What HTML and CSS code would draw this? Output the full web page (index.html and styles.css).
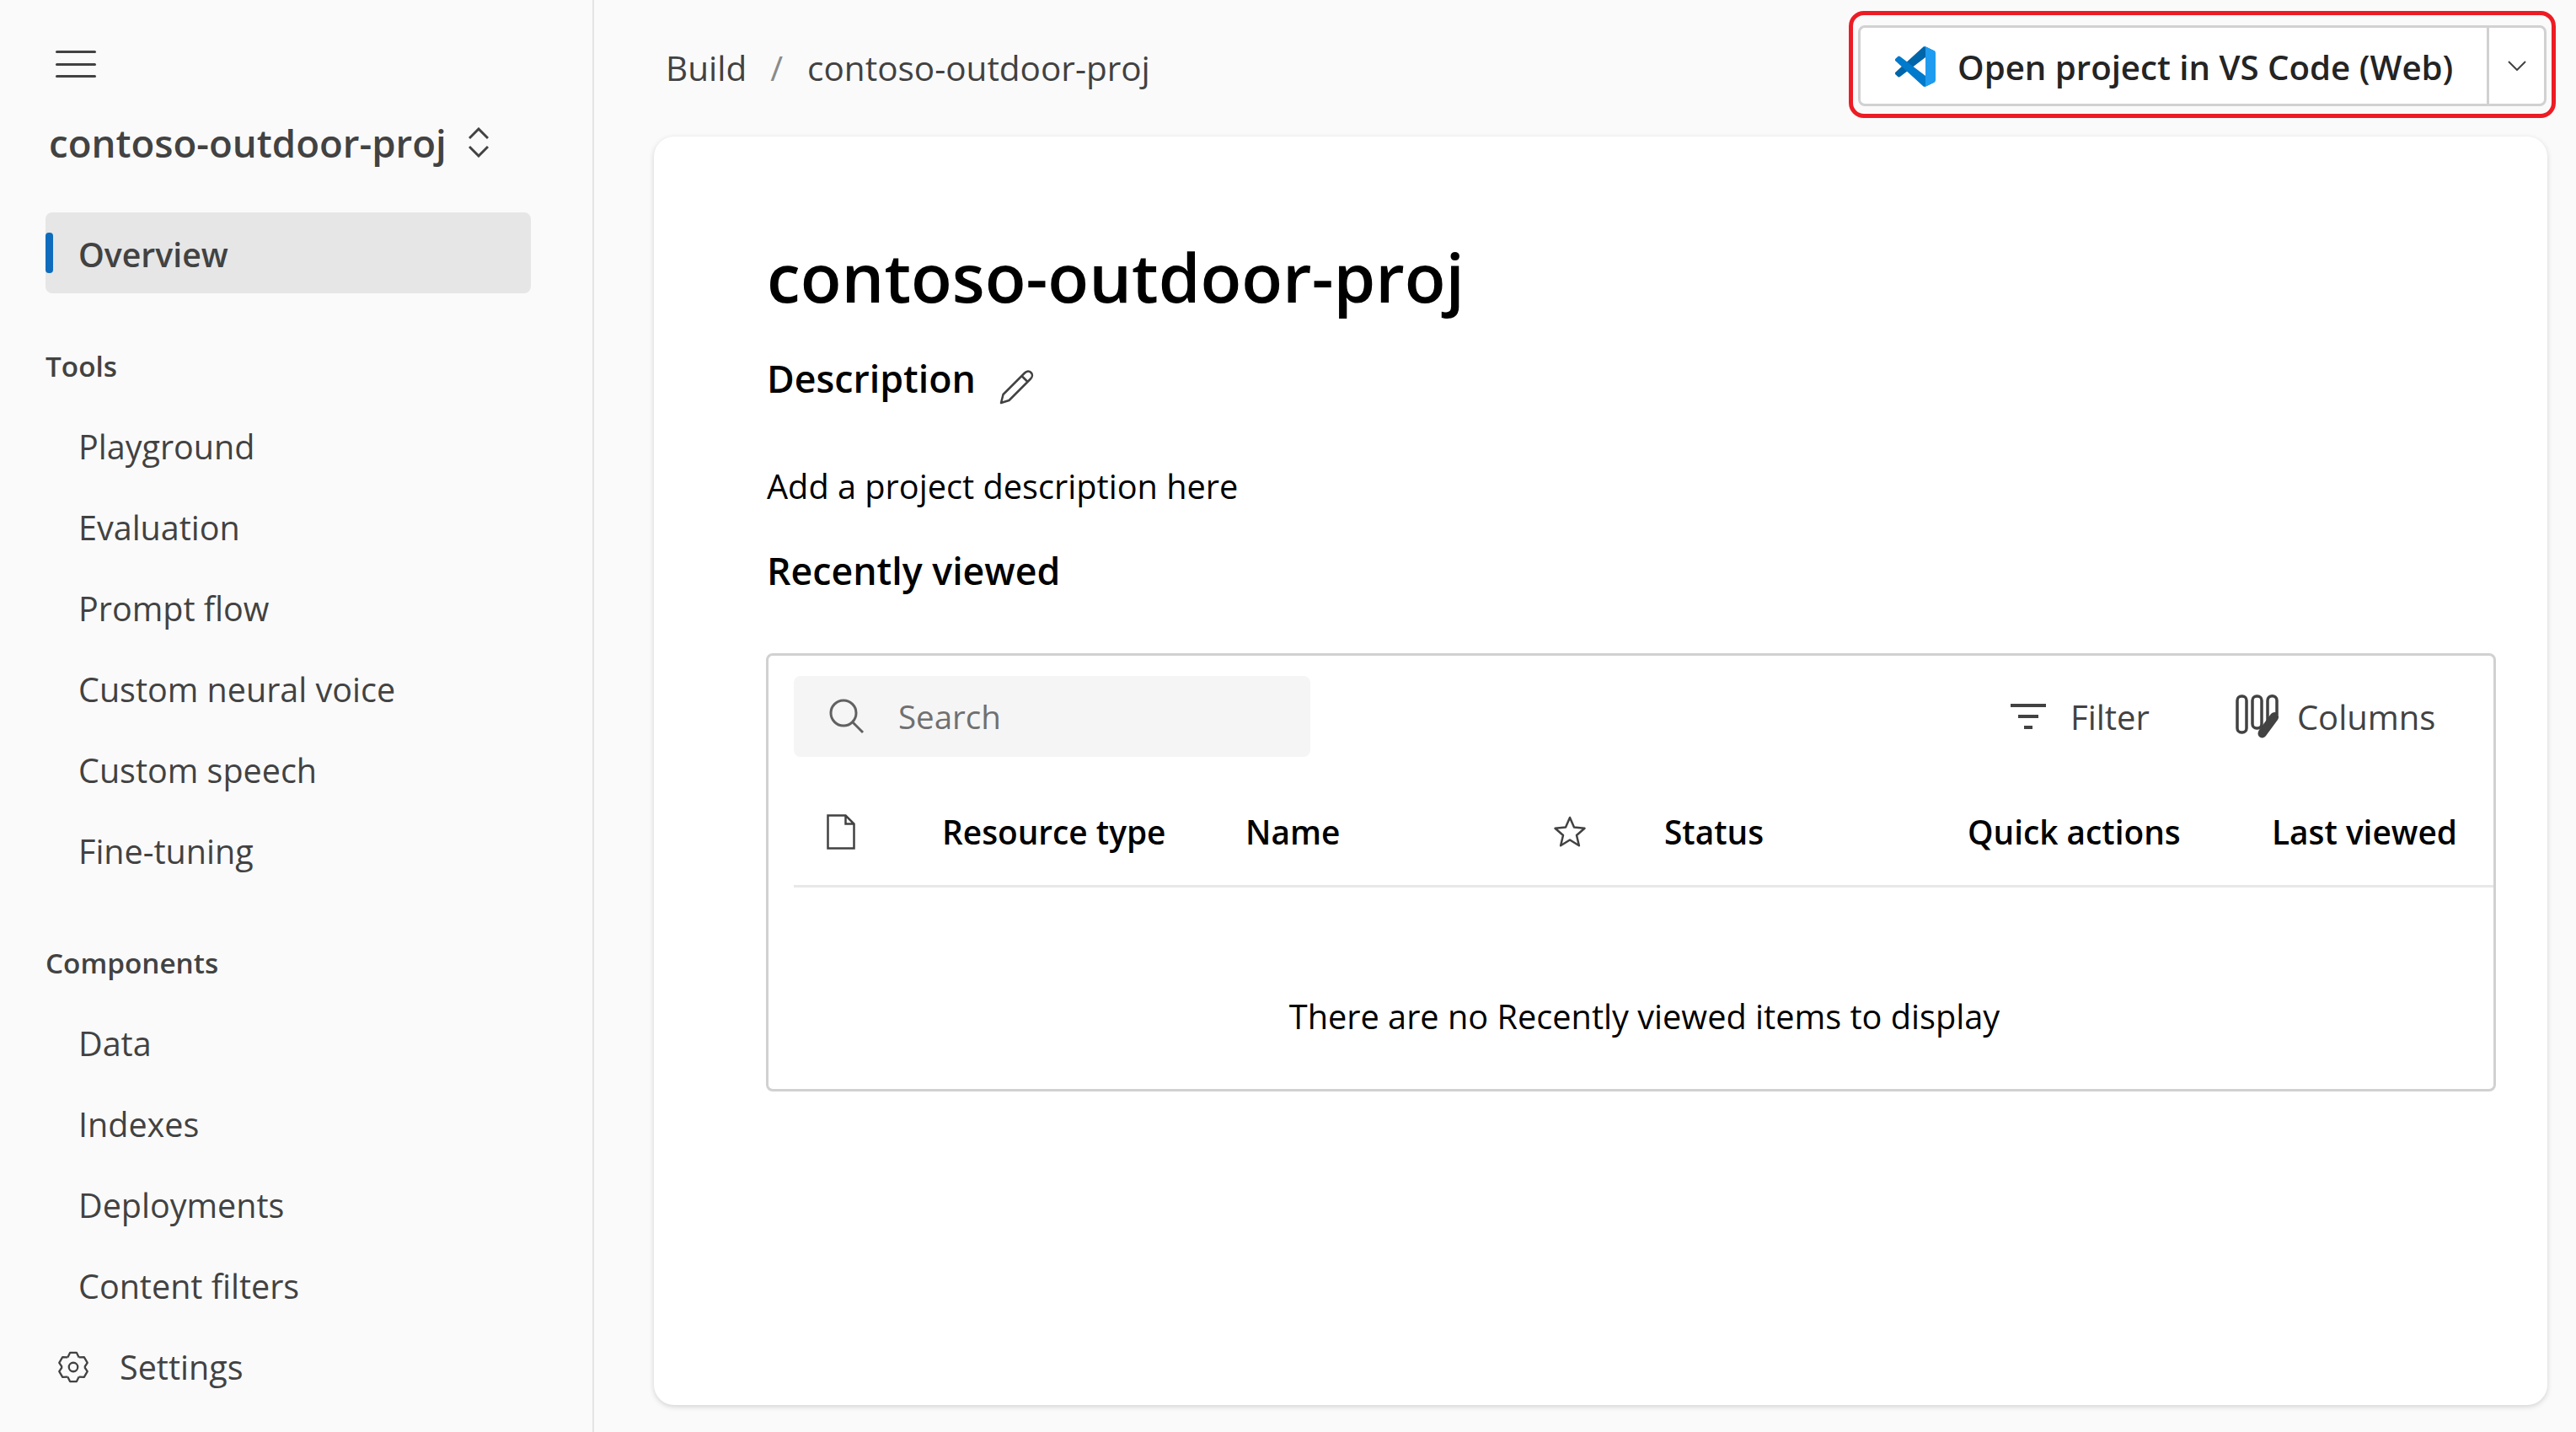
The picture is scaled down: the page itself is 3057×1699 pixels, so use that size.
FILE: index.html
```html
<!DOCTYPE html>
<html lang="en">
<head>
    <meta charset="UTF-8">
    <link rel="stylesheet" href="styles.css">
    <title>contoso-outdoor-proj</title>
</head>
<body>
    <aside class="sidebar">
        <div class="hamburger"><span></span><span></span><span></span></div>
        <div class="project-row">
            <span class="project-name">contoso-outdoor-proj</span>
            <svg class="updown" viewBox="0 0 24 36"><path d="M1 13 12 2l11 11M1 23l11 11 11-11"/></svg>
        </div>
        <a class="overview"><span>Overview</span></a>
        <div class="nav-label tools">Tools</div>
        <a class="nav-item">Playground</a>
        <a class="nav-item">Evaluation</a>
        <a class="nav-item">Prompt flow</a>
        <a class="nav-item">Custom neural voice</a>
        <a class="nav-item">Custom speech</a>
        <a class="nav-item">Fine-tuning</a>
        <div class="nav-label components">Components</div>
        <a class="nav-item">Data</a>
        <a class="nav-item">Indexes</a>
        <a class="nav-item">Deployments</a>
        <a class="nav-item">Content filters</a>
        <a class="nav-item settings">
            <svg class="gear" viewBox="0 0 24 24">
                <circle cx="12" cy="12" r="3"/>
                <path d="M8.2 5.42 9.75 2.26h4.5l1.55 3.16"/>
                <path transform="rotate(60 12 12)" d="M8.2 5.42 9.75 2.26h4.5l1.55 3.16"/>
                <path transform="rotate(120 12 12)" d="M8.2 5.42 9.75 2.26h4.5l1.55 3.16"/>
                <path transform="rotate(180 12 12)" d="M8.2 5.42 9.75 2.26h4.5l1.55 3.16"/>
                <path transform="rotate(240 12 12)" d="M8.2 5.42 9.75 2.26h4.5l1.55 3.16"/>
                <path transform="rotate(300 12 12)" d="M8.2 5.42 9.75 2.26h4.5l1.55 3.16"/>
            </svg>
            <span>Settings</span>
        </a>
    </aside>

    <main class="main">
        <header class="topbar">
            <nav class="crumbs">
                <span>Build</span>
                <span class="crumb-sep">/</span>
                <span>contoso-outdoor-proj</span>
            </nav>
            <div class="split-button">
                <div class="btn-main">
                    <svg class="vscode" viewBox="0 0 100 100">
                        <path fill="#0065A9" d="M96.461 10.796 75.857.876a6.23 6.23 0 0 0-7.107 1.207L1.299 63.583a4.167 4.167 0 0 0 .004 6.162l5.51 5.009a4.167 4.167 0 0 0 5.32.236L93.36 13.37c2.72-2.063 6.627-.123 6.627 3.292v-.239a6.25 6.25 0 0 0-3.526-5.627z"/>
                        <path fill="#007ACC" d="m96.461 89.204-20.604 9.92a6.23 6.23 0 0 1-7.107-1.207L1.299 36.417a4.167 4.167 0 0 1 .004-6.162l5.51-5.009a4.167 4.167 0 0 1 5.32-.236L93.36 86.63c2.72 2.063 6.627.123 6.627-3.292v.239a6.25 6.25 0 0 1-3.526 5.627z"/>
                        <path fill="#1F9CF0" d="M75.858 99.126a6.232 6.232 0 0 1-7.108-1.21c2.306 2.307 6.25.674 6.25-2.588V4.672c0-3.262-3.944-4.895-6.25-2.589a6.232 6.232 0 0 1 7.108-1.21l20.6 9.908A6.25 6.25 0 0 1 100 16.413v67.174a6.25 6.25 0 0 1-3.542 5.632l-20.6 9.907z"/>
                    </svg>
                    <span>Open project in VS Code (Web)</span>
                </div>
                <div class="btn-caret">
                    <svg viewBox="0 0 22 12"><path d="M1 1l10 10L21 1"/></svg>
                </div>
                <div class="callout"></div>
            </div>
        </header>

        <section class="card">
            <h1>contoso-outdoor-proj</h1>
            <div class="desc-row">
                <h2>Description</h2>
                <svg class="pencil" viewBox="0 0 42 42"><path d="M2 40l2.500-10L30 4.500c2.500-2.500 5.500-2.500 7.500-.5s2 5-.5 7.500L11.500 37zM26.500 8l7.500 7.500"/></svg>
            </div>
            <p class="desc-text">Add a project description here</p>
            <h2 class="recent">Recently viewed</h2>

            <div class="table-box">
                <div class="toolbar">
                    <div class="search">
                        <svg viewBox="0 0 42 42"><circle cx="17" cy="17" r="15"/><path d="M28 28l12 12"/></svg>
                        <span>Search</span>
                    </div>
                    <div class="tool filter">
                        <svg viewBox="0 0 42 30"><path d="M0 2h42M9 15h24M16 28h10"/></svg>
                        <span>Filter</span>
                    </div>
                    <div class="tool columns">
                        <svg viewBox="0 0 52 52">
                            <rect x="2" y="2" width="11" height="43" rx="5"/>
                            <rect x="20" y="2" width="11" height="38" rx="5"/>
                            <path d="M38 32V7c0-7 11-7 11 0v17"/>
                            <path class="solid" d="M28 50c-2-2-2-5 0-8l14-19c2-2 5-3 7-1s3 5 1 8L36 49c-2 3-6 3-8 1z"/>
                        </svg>
                        <span>Columns</span>
                    </div>
                </div>
                <div class="head-row">
                    <svg class="file" viewBox="0 0 34 42"><path d="M1.500 1.500h21l10 10v29h-31zM22.500 1.500v10h10"/></svg>
                    <span>Resource type</span>
                    <span>Name</span>
                    <svg class="star" viewBox="0 0 40 40"><path d="M20 3l5 11.500 12.500 1.200-9.500 8.300 2.900 12.300L20 29.500 9.100 36.300 12 24l-9.500-8.300L15 14.500z"/></svg>
                    <span>Status</span>
                    <span>Quick actions</span>
                    <span>Last viewed</span>
                </div>
                <p class="empty">There are no Recently viewed items to display</p>
            </div>
        </section>
    </main>
</body>
</html>
```

FILE: styles.css
```css
* {
    box-sizing: border-box;
}

html, body {
    height: 100%;
}

body {
    margin: 0;
    display: flex;
    background: #fafafa;
    color: #242424;
    font-family: "Open Sans", "Noto Sans", sans-serif;
    font-size: 39.5px;
    white-space: nowrap;
    overflow: hidden;
}

/* sidebar */
.sidebar {
    width: 705px;
    flex: none;
    padding: 60px 0 0 54px;
    border-right: 2px solid #e4e4e4;
    color: #424242;
}

.hamburger {
    width: 48px;
    margin-left: 12px;
    height: 32px;
    display: flex;
    flex-direction: column;
    justify-content: space-between;
}

.hamburger span {
    height: 3px;
    background: #424242;
    border-radius: 2px;
}

.project-row {
    height: 60px;
    margin-top: 48px;
    padding: 0 0 2px 4px;
    display: flex;
    align-items: center;
    gap: 26px;
}

.project-name {
    font-size: 45.6px;
    font-weight: 600;
}

.updown {
    width: 24px;
    height: 36px;
    fill: none;
    stroke: #424242;
    stroke-width: 3;
}

.overview {
    display: flex;
    align-items: center;
    width: 576px;
    height: 96px;
    margin-top: 52px;
    padding: 2px 0 0 39px;
    position: relative;
    background: #e6e6e6;
    border-radius: 8px;
    font-size: 39.2px;
    font-weight: 600;
}

.overview::before {
    content: "";
    position: absolute;
    left: 0;
    top: 24px;
    width: 9px;
    height: 48px;
    border-radius: 4px;
    background: #0f6cbd;
}

.nav-label {
    height: 96px;
    line-height: 96px;
    font-size: 33.3px;
    font-weight: 600;
}

.tools {
    margin-top: 38px;
}

.components {
    margin-top: 36px;
}

.nav-item {
    display: block;
    height: 96px;
    line-height: 96px;
    padding-left: 39px;
}

.settings {
    display: flex;
    align-items: center;
    gap: 34px;
    padding-left: 12px;
}

.gear {
    width: 42px;
    height: 42px;
    fill: none;
    stroke: #424242;
    stroke-width: 1.3;
    stroke-linejoin: round;
}

/* main */
.main {
    flex: 1;
    display: flex;
    flex-direction: column;
    min-width: 0;
    padding: 0 34px 32px 71px;
}

.topbar {
    height: 162px;
    flex: none;
    display: flex;
    justify-content: space-between;
    align-items: flex-start;
    padding-top: 30px;
}

.crumbs {
    height: 100px;
    display: flex;
    align-items: center;
    padding-left: 14px;
    color: #424242;
    font-size: 40.5px;
}

.crumb-sep {
    margin: 0 29px 0 28px;
    color: #8a8a8a;
}

.split-button {
    position: relative;
    display: flex;
    height: 96px;
    width: 817px;
    margin-right: 1px;
    background: #fff;
    border: 3px solid #d1d1d1;
    border-radius: 8px;
}

.btn-main {
    flex: 1;
    display: flex;
    align-items: center;
    gap: 26px;
    padding: 2px 0 0 41px;
    font-size: 40.2px;
    font-weight: 600;
}

.vscode {
    width: 48px;
    height: 48px;
}

.btn-caret {
    width: 68px;
    display: flex;
    align-items: center;
    justify-content: center;
    border-left: 3px solid #d1d1d1;
}

.btn-caret svg {
    width: 22px;
    height: 12px;
    fill: none;
    stroke: #424242;
    stroke-width: 2;
}

/* red annotation round the button */
.callout {
    position: absolute;
    inset: -20px -14px -17px -14px;
    border: 5px solid #ed1c24;
    border-radius: 18px;
}

.card {
    flex: 1;
    padding: 116px 61px 0 134px;
    background: #fff;
    border-radius: 24px;
    box-shadow: 0 2px 6px rgba(0, 0, 0, 0.16);
}

h1 {
    margin: 0;
    font-size: 80px;
    line-height: 100px;
    font-weight: 600;
    color: #000;
}

h2 {
    margin: 0;
    font-size: 44.7px;
    line-height: 60px;
    font-weight: 600;
    color: #000;
}

.desc-row {
    display: flex;
    align-items: center;
    margin-top: 40px;
    gap: 28px;
}

.pencil {
    width: 42px;
    height: 42px;
    margin-top: 20px;
    fill: none;
    stroke: #424242;
    stroke-width: 2.5;
    stroke-linejoin: round;
}

.desc-text {
    margin: 67px 0 0;
    line-height: 60px;
    color: #000;
    font-size: 39.7px;
}

.recent {
    margin-top: 40px;
}

.table-box {
    height: 520px;
    margin: 68px 0 0 -1px;
    border: 3px solid #d1d1d1;
    border-radius: 8px;
    padding: 24px 0 0 30px;
}

.toolbar {
    display: flex;
    align-items: center;
    height: 96px;
    color: #424242;
}

.search {
    width: 613px;
    height: 96px;
    display: flex;
    align-items: center;
    gap: 40px;
    padding-left: 42px;
    background: #f5f5f5;
    border-radius: 8px;
    color: #707070;
    font-size: 38.5px;
}

.search svg {
    width: 42px;
    height: 42px;
    fill: none;
    stroke: #616161;
    stroke-width: 3;
}

.tool {
    display: flex;
    align-items: center;
    font-size: 40px;
}

.filter {
    margin-left: 831px;
    gap: 29px;
}

.filter svg {
    width: 42px;
    height: 30px;
    fill: none;
    stroke: #424242;
    stroke-width: 4;
}

.columns {
    margin-left: 102px;
    gap: 21px;
}

.columns svg {
    width: 52px;
    height: 52px;
    fill: none;
    stroke: #424242;
    stroke-width: 3.5;
}

.columns .solid {
    fill: #424242;
    stroke: none;
}

.head-row {
    display: grid;
    grid-template-columns: 137px 360px 365px 132px 360px 361px auto;
    align-items: center;
    height: 155px;
    padding: 26px 0 0 39px;
    border-bottom: 3px solid #e8e8e8;
    font-size: 38.8px;
    font-weight: 600;
    color: #000;
}

.file {
    width: 34px;
    height: 42px;
    fill: none;
    stroke: #424242;
    stroke-width: 2.5;
}

.star {
    width: 40px;
    height: 40px;
    fill: none;
    stroke: #424242;
    stroke-width: 2.5;
    stroke-linejoin: round;
}

.empty {
    margin: 123px 0 0;
    padding-left: 2px;
    line-height: 60px;
    text-align: center;
    color: #000;
    font-size: 39.7px;
}
```
